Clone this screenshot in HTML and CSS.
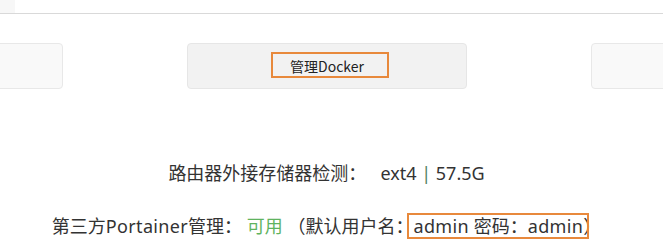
FILE: index.html
```html
<!DOCTYPE html>
<html lang="zh-CN">
<head>
<meta charset="utf-8">
<title>Docker</title>
<link rel="stylesheet" href="styles.css">
</head>
<body>
<div class="topbar"><div class="tab"></div></div>
<div class="btn-row">
  <div class="btn"></div>
  <div class="btn btn-active">
    <span class="btn-label">管理Docker</span>
    <span class="note-box note-btn"></span>
  </div>
  <div class="btn"></div>
</div>
<div class="info">
  <p class="line">路由器外接存储器检测：&nbsp;&nbsp; ext4 <span class="sep">|</span> 57.5G</p>
  <p class="line line-2">第三方<span class="lat">Portainer</span>管理： <span class="ok">可用</span> （默认用户名：<span class="mark"><span class="lat">admin</span> 密码：<span class="lat">admin</span><span class="note-box note-mark"></span></span>）</p>
</div>
</body>
</html>
```

FILE: styles.css
```css
html, body {
  margin: 0;
  padding: 0;
  background: #ffffff;
  overflow: hidden;
}
body {
  width: 663px;
  height: 250px;
  font-family: "Noto Sans", "Noto Sans CJK SC", sans-serif;
  color: #333333;
}
.topbar {
  height: 13px;
  border-bottom: 1px solid #d9d9d9;
}
.tab {
  width: 15px;
  height: 13px;
  background: #f7f7f7;
}
.btn-row {
  display: flex;
  justify-content: center;
  gap: 124px;
  margin-top: 29px;
  padding-right: 9px;
}
.btn {
  position: relative;
  flex: 0 0 280px;
  height: 46px;
  box-sizing: border-box;
  border: 1px solid #e8e8e8;
  border-radius: 4px;
  background: #f9f9f9;
  display: flex;
  align-items: center;
  justify-content: center;
}
.btn-active {
  background: #f2f2f2;
  border-color: #e6e6e6;
}
.btn-label {
  font-family: "Noto Sans CJK SC", sans-serif;
  font-size: 14px;
  color: #222222;
  line-height: 20px;
}
.note-box {
  position: absolute;
  box-sizing: border-box;
  border: 2px solid #e8893c;
  pointer-events: none;
}
.note-btn {
  left: 83px;
  top: 8px;
  width: 118px;
  height: 26px;
}
.info {
  margin-top: 72px;
  padding-right: 10px;
  text-align: center;
}
.line {
  margin: 0;
  font-size: 18px;
  line-height: 24px;
  white-space: nowrap;
}
.line-2 {
  margin-top: 29px;
}
.lat {
  letter-spacing: 0.35px;
}
.sep {
  color: #4f8060;
}
.ok {
  color: #5fb35f;
}
.mark {
  position: relative;
}
.note-mark {
  left: -6px;
  right: -6px;
  top: -1px;
  height: 26px;
}
```
